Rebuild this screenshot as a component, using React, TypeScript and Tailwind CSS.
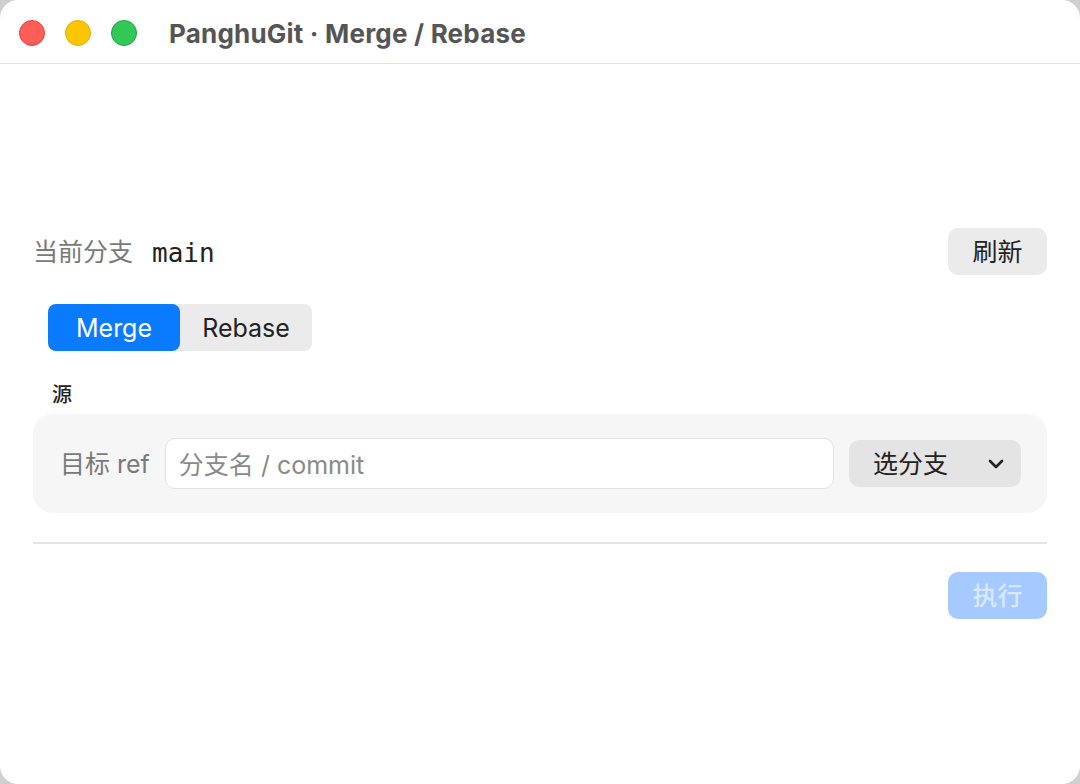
import { ChevronDown } from 'lucide-react';

const sans = 'font-["Inter","Noto_Sans_CJK_SC",sans-serif]';

function TrafficLights() {
  return (
    <div className="flex items-center gap-[20px]">
      <span className="h-[26px] w-[26px] rounded-full border border-[#e33e3a] bg-[#ff5f57]" />
      <span className="h-[26px] w-[26px] rounded-full border border-[#e2ac00] bg-[#fdc600]" />
      <span className="h-[26px] w-[26px] rounded-full border border-[#14a831] bg-[#33c758]" />
    </div>
  );
}

export default function App() {
  return (
    <div className="h-[784px] w-[1080px] bg-[#cfcfcf]">
      <div className={`flex h-full w-full flex-col overflow-hidden rounded-[18px] bg-white ${sans}`}>
        <header className="flex h-[64px] shrink-0 items-center gap-[32px] border-b border-[#e2e2e2] pl-[19px] pt-[2px]">
          <TrafficLights />
          <h1 className="pt-[2px] text-[26px] font-bold tracking-[0.2px] text-[#555555]">PanghuGit · Merge / Rebase</h1>
        </header>

        <main className="flex flex-1 flex-col justify-center px-[33px] pb-[1px]">
          <div className="flex h-[47px] items-center justify-between">
            <div className="flex items-center gap-[19px] pt-[3px]">
              <span className="text-[25px] text-[#7a7a7a]">当前分支</span>
              <span className='font-["DejaVu_Sans_Mono",monospace] text-[26px] text-[#222222]'>main</span>
            </div>
            <button className="h-[47px] w-[99px] rounded-[10px] bg-[#ebebeb] pt-[3px] text-[25px] text-[#222222]">刷新</button>
          </div>

          <div className="ml-[15px] mt-[29px] flex h-[47px] w-[264px] rounded-[8px] bg-[#ebebeb] text-[25px]">
            <button className="flex-1 rounded-[8px] bg-[#0a7aff] pt-[3px] text-white">Merge</button>
            <button className="flex-1 pt-[3px] text-[#222222]">Rebase</button>
          </div>

          <div className="ml-[19px] mt-[30px] pt-[1px] text-[20px] font-medium leading-[26px] text-[#222222]">源</div>

          <div className="mt-[6px] flex h-[99px] items-center gap-[15px] rounded-[20px] bg-[#f6f6f6] pl-[27px] pr-[26px]">
            <span className="shrink-0 pt-[3px] text-[25px] text-[#7a7a7a]">目标 ref</span>
            <input
              placeholder="分支名 / commit"
              className="h-[51px] flex-1 rounded-[10px] border border-[#e3e3e3] bg-white px-[13px] pt-[3px] text-[25px] text-[#222222] outline-none placeholder:text-[#8a8a8a]"
            />
            <button className="flex h-[47px] w-[172px] items-center justify-between rounded-[10px] bg-[#e4e4e4] pl-[24px] pr-[13px] text-[25px] text-[#222222]">
              <span className="pt-[3px]">选分支</span>
              <ChevronDown size={24} strokeWidth={2.6} className="text-[#222222]" />
            </button>
          </div>

          <div className="mt-[29px] h-[2px] bg-[#e6e6e6]" />

          <div className="mt-[28px] flex justify-end">
            <button className="h-[47px] w-[99px] rounded-[10px] bg-[#a5caff] pt-[3px] text-[25px] font-medium text-[#d9e8ff]">执行</button>
          </div>
        </main>
      </div>
    </div>
  );
}
